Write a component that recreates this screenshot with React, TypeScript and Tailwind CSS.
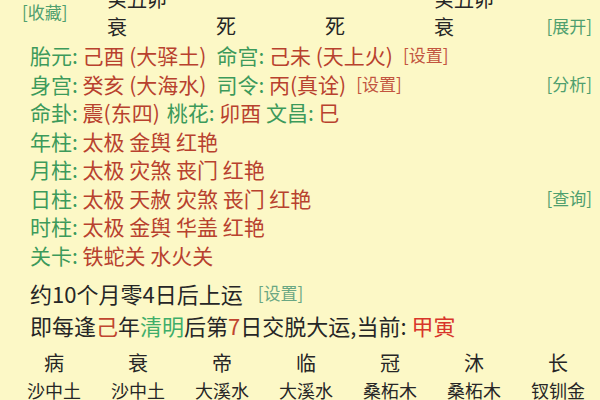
import React from "react";

const G = "text-[#3c9a5b]";
const R = "text-[#b8412e]";

function Link({ children, red, className = "" }: { children: React.ReactNode; red?: boolean; className?: string }) {
  return (
    <span className={`text-[17px] ${red ? "text-[#c2553f]" : "text-[#4f9f6e]"} ${className}`}>[{children}]</span>
  );
}

function Row({ children, right }: { children: React.ReactNode; right?: React.ReactNode }) {
  return (
    <div className="flex items-center h-[28.5px] pl-[30px] pr-[8px] text-[21px] leading-[28px] whitespace-pre">
      <div className="flex-1 flex items-center">{children}</div>
      {right}
    </div>
  );
}

export default function App() {
  const cols = [
    { top: "癸丑卯", bot: "衰" },
    { top: "", bot: "死" },
    { top: "", bot: "死" },
    { top: "癸丑卯", bot: "衰" },
  ];
  const grid = [
    ["病", "沙中土"],
    ["衰", "沙中土"],
    ["帝", "大溪水"],
    ["临", "大溪水"],
    ["冠", "桑柘木"],
    ["沐", "桑柘木"],
    ["长", "钗钏金"],
  ];
  return (
    <div
      className="w-[600px] h-[400px] overflow-hidden bg-[#fcf8c6] text-[#262626]"
      style={{ fontFamily: '"Noto Sans CJK SC", "Noto Sans", sans-serif' }}
    >
      {/* header table */}
      <div className="flex -mt-[15px] h-[55px]">
        <div className="w-[107px] pl-[22px] pt-[16px] leading-[22px]">
          <Link>收藏</Link>
        </div>
        {cols.map((c, i) => (
          <div key={i} className="w-[109px] flex flex-col text-[20px] leading-[28px]">
            <div className="h-[28px]">{c.top}</div>
            <div className="h-[28px]">{c.bot}</div>
          </div>
        ))}
        <div className="flex-1 flex justify-end items-end pr-[8px] pb-[2px]">
          <Link>展开</Link>
        </div>
      </div>

      <div className="pt-[1px]">
        <Row>
          <span className={G}>胎元: </span>
          <span className={R}>己酉 (大驿土)</span>
          <span className={`${G} ml-[10px]`}>命宫: </span>
          <span className={R}>己未 (天上火)</span>
          <Link red className="ml-[10px]">设置</Link>
        </Row>
        <Row right={<Link>分析</Link>}>
          <span className={G}>身宫: </span>
          <span className={R}>癸亥 (大海水)</span>
          <span className={`${G} ml-[10px]`}>司令: </span>
          <span className={R}>丙(真诠)</span>
          <Link red className="ml-[10px]">设置</Link>
        </Row>
        <Row>
          <span className={G}>命卦: </span>
          <span className={R}>震(东四)</span>
          <span className={`${G} ml-[7px]`}>桃花: </span>
          <span className={R}>卯酉 </span>
          <span className={G}>文昌: </span>
          <span className={R}>巳</span>
        </Row>
        <Row>
          <span className={G}>年柱: </span>
          <span className={R}>太极 金舆 红艳</span>
        </Row>
        <Row>
          <span className={G}>月柱: </span>
          <span className={R}>太极 灾煞 丧门 红艳</span>
        </Row>
        <Row right={<Link>查询</Link>}>
          <span className={G}>日柱: </span>
          <span className={R}>太极 天赦 灾煞 丧门 红艳</span>
        </Row>
        <Row>
          <span className={G}>时柱: </span>
          <span className={R}>太极 金舆 华盖 红艳</span>
        </Row>
        <Row>
          <span className={G}>关卡: </span>
          <span className={R}>铁蛇关 水火关</span>
        </Row>
      </div>

      <div className="mt-[8px] pl-[30px] text-[22px] leading-[32px] whitespace-pre">
        <div className="flex items-center h-[32px]">
          <span>约10个月零4日后上运</span>
          <span className="ml-[15px] text-[17px] text-[#6aa783]">[设置]</span>
        </div>
        <div className="flex items-center h-[32px]">
          <span>即每逢</span>
          <span className="text-[#c0452f]">己</span>
          <span>年</span>
          <span className="text-[#3fae6a]">清明</span>
          <span>后第</span>
          <span className="text-[#c0452f]">7</span>
          <span>日交脱大运,当前: </span>
          <span className="text-[#d8352a]">甲寅</span>
        </div>
      </div>

      <div className="mt-[9px] pl-[12px] grid grid-cols-7 w-[600px]">
        {grid.map(([a, b], i) => (
          <div key={i} className="flex flex-col items-center">
            <div className="h-[27px] leading-[26px] text-[20px]">{a}</div>
            <div className="h-[26px] leading-[26px] text-[18px]">{b}</div>
          </div>
        ))}
      </div>
    </div>
  );
}
